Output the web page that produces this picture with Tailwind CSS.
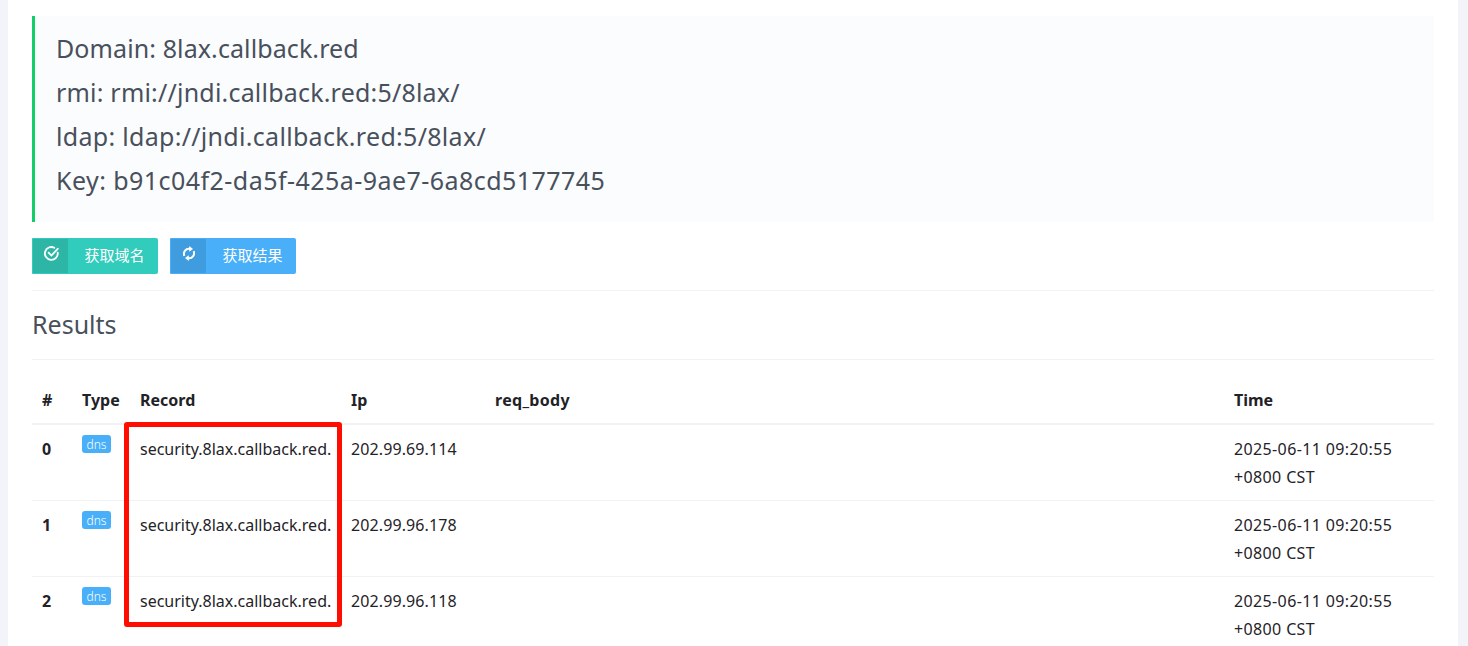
<!DOCTYPE html>
<html lang="en">
<head>
    <meta charset="UTF-8">
    <title>Results</title>
    <script src="https://cdn.jsdelivr.net/npm/@tailwindcss/browser@4"></script>
</head>
<body class="bg-[#f3f4f9] h-[646px] overflow-hidden font-['Noto_Sans','Noto_Sans_CJK_SC',sans-serif]">

    <div class="relative ml-2 mr-[10px] bg-white h-[646px] px-6 pt-4 overflow-hidden">
        <!-- domain info -->
        <div class="h-[206px] border-l-[3px] border-[#13ce66] bg-[#fbfcfe] pl-[21px] pt-[10px] text-[25px] leading-[44px] text-[#48505c]">
            <p class="tracking-[0.1px]">Domain: 8lax.callback.red</p>
            <p class="tracking-[0.2px]">rmi: rmi://jndi.callback.red:5/8lax/</p>
            <p class="tracking-[0.3px]">ldap: ldap://jndi.callback.red:5/8lax/</p>
            <p class="tracking-[0.45px]">Key: b91c04f2-da5f-425a-9ae7-6a8cd5177745</p>
        </div>

        <div class="flex gap-3 mt-4">
            <button class="flex w-[126px] h-9 rounded-[2px] overflow-hidden bg-[#32ccbc] text-white text-[15px]">
                <span class="flex w-[37px] h-full pt-[7px] pl-[11px] bg-[#2db5a6] border border-[#32ccbc]">
                    <svg class="w-[15px] h-[15px]" viewBox="0 0 14 14" fill="none" stroke="currentColor" stroke-width="1.7" stroke-linecap="round">
                        <path d="M12.8 6.2A6 6 0 1 1 9.6 1.6"/>
                        <path d="M4.3 6.2l2.6 2.7 5.9-6.3"/>
                    </svg>
                </span>
                <span class="flex-1 pl-0.5 text-center leading-[35px]">获取域名</span>
            </button>
            <button class="flex w-[126px] h-9 rounded-[2px] overflow-hidden bg-[#48aff8] text-white text-[15px]">
                <span class="flex w-[37px] h-full pt-[7px] pl-3 bg-[#3f9ddf] border border-[#48aff8]">
                    <svg class="w-3 h-[15px]" viewBox="0 0 12 14" fill="none" stroke="currentColor" stroke-width="2">
                        <path d="M1.4 9.4A5 5 0 0 1 7 2.4"/>
                        <path d="M10.6 4.6A5 5 0 0 1 5 11.6"/>
                        <path d="M6.2 -0.4v5.6L10 2.4z" fill="currentColor" stroke="none"/>
                        <path d="M5.8 14.4V8.8L2 11.6z" fill="currentColor" stroke="none"/>
                    </svg>
                </span>
                <span class="flex-1 pl-0.5 text-center leading-[35px]">获取结果</span>
            </button>
        </div>

        <hr class="mt-4 border-[#f2f2f4]">

        <h2 class="mt-[17px] text-[25px] leading-8 text-[#48505c]">Results</h2>

        <hr class="mt-[19px] border-[#f2f2f4]">

        <table class="mt-[26px] w-full table-fixed text-[16px] leading-7 text-[#1f2328]">
            <thead>
                <tr class="border-b-2 border-[#f2f2f4] text-left">
                    <th class="w-10 pl-[10px] pb-[9px] font-bold">#</th>
                    <th class="w-[58px] pl-[10px] pb-[9px] font-bold">Type</th>
                    <th class="w-[211px] pl-[10px] pb-[9px] font-bold">Record</th>
                    <th class="w-36 pl-[10px] pb-[9px] font-bold">Ip</th>
                    <th class="pl-[10px] pb-[9px] font-bold tracking-[0.3px]">req_body</th>
                    <th class="w-[210px] pl-[10px] pb-[9px] font-bold">Time</th>
                </tr>
            </thead>
            <tbody>
                <tr class="border-b border-[#f2f2f4] align-top">
                    <td class="pl-[10px] pt-[10px] pb-[9px] font-bold">0</td>
                    <td class="pl-[10px] pt-[10px] pb-[9px]"><span class="block w-[29px] h-[18px] rounded-[3px] bg-[#48aff8] text-white text-[12px] font-light leading-[20px] text-center">dns</span></td>
                    <td class="pl-[10px] pt-[10px] pb-[9px]">security.8lax.callback.red.</td>
                    <td class="pl-[10px] pt-[10px] pb-[9px] tracking-[0.1px]">202.99.69.114</td>
                    <td class="pl-[10px] pt-[10px] pb-[9px]"></td>
                    <td class="pl-[10px] pt-[10px] pb-[9px] tracking-[0.37px]">2025-06-11 09:20:55 +0800 CST</td>
                </tr>
                <tr class="border-b border-[#f2f2f4] align-top">
                    <td class="pl-[10px] pt-[10px] pb-[9px] font-bold">1</td>
                    <td class="pl-[10px] pt-[10px] pb-[9px]"><span class="block w-[29px] h-[18px] rounded-[3px] bg-[#48aff8] text-white text-[12px] font-light leading-[20px] text-center">dns</span></td>
                    <td class="pl-[10px] pt-[10px] pb-[9px]">security.8lax.callback.red.</td>
                    <td class="pl-[10px] pt-[10px] pb-[9px] tracking-[0.1px]">202.99.96.178</td>
                    <td class="pl-[10px] pt-[10px] pb-[9px]"></td>
                    <td class="pl-[10px] pt-[10px] pb-[9px] tracking-[0.37px]">2025-06-11 09:20:55 +0800 CST</td>
                </tr>
                <tr class="align-top">
                    <td class="pl-[10px] pt-[10px] pb-[9px] font-bold">2</td>
                    <td class="pl-[10px] pt-[10px] pb-[9px]"><span class="block w-[29px] h-[18px] rounded-[3px] bg-[#48aff8] text-white text-[12px] font-light leading-[20px] text-center">dns</span></td>
                    <td class="pl-[10px] pt-[10px] pb-[9px]">security.8lax.callback.red.</td>
                    <td class="pl-[10px] pt-[10px] pb-[9px] tracking-[0.1px]">202.99.96.118</td>
                    <td class="pl-[10px] pt-[10px] pb-[9px]"></td>
                    <td class="pl-[10px] pt-[10px] pb-[9px] tracking-[0.37px]">2025-06-11 09:20:55 +0800 CST</td>
                </tr>
            </tbody>
        </table>

        <!-- red annotation drawn over the record column -->
        <div class="absolute left-[116px] top-[422px] w-[218px] h-[205px] border-[5px] border-[#fe0d00] rounded-[3px]"></div>
    </div>

</body>
</html>
